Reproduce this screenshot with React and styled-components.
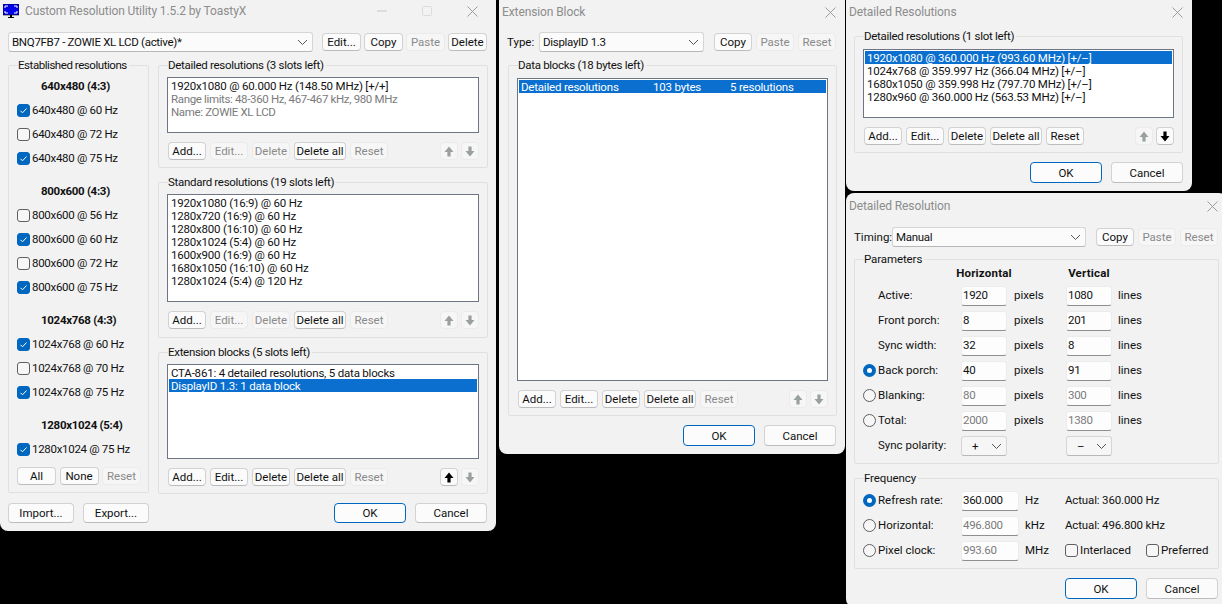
import React from "react";
import styled, { createGlobalStyle } from "styled-components";

const Global = createGlobalStyle`
  html, body { margin: 0; padding: 0; height: 100%; background: #000; overflow: hidden; }
  #root { height: 100%; }
  * { box-sizing: border-box; }
`;

const Desktop = styled.div`
  position: relative;
  width: 1222px;
  height: 604px;
  overflow: hidden;
  background: #000;
  font-family: Roboto, "Noto Sans", "Liberation Sans", sans-serif;
  font-size: 11.5px;
  line-height: 16px;
  color: #111;
`;

const Win = styled.section`
  position: absolute;
  left: ${(p) => p.$x}px;
  top: ${(p) => p.$y}px;
  width: ${(p) => p.$w}px;
  height: ${(p) => p.$h}px;
  background: #f2f2f2;
  border-radius: ${(p) => (p.$y > 0 ? "8px 8px 8px 8px" : "0 0 8px 8px")};
  padding: 0 8px;
  overflow: hidden;
`;

const TitleBar = styled.header`
  display: flex;
  align-items: center;
  height: ${(p) => p.$h}px;
  margin-left: -5px;
  padding-bottom: ${(p) => p.$pb}px;
  color: #8c8c8c;
  font-size: 12px;
  letter-spacing: -0.1px;
`;
const TitleText = styled.span`
  flex: 1;
  white-space: nowrap;
`;
const Controls = styled.div`
  display: flex;
  align-items: center;
  gap: ${(p) => p.$gap || 0}px;
  margin-right: ${(p) => p.$mr}px;
`;
const Glyph = styled.svg`
  display: block;
  flex: none;
`;

const Row = styled.div`
  display: flex;
  align-items: center;
`;
const TopRow = styled(Row)`
  height: 20px;
  gap: ${(p) => p.$gap ?? 3}px;
`;

const Combo = styled.div`
  display: flex;
  align-items: center;
  justify-content: space-between;
  flex: none;
  width: ${(p) => p.$w}px;
  height: 20px;
  padding: 0 4px 0 3px;
  margin-right: ${(p) => p.$mr || 0}px;
  letter-spacing: -0.3px;
  background: #fbfbfb;
  border: 1px solid #d6d6d6;
  border-bottom-color: #b8b8b8;
  border-radius: 3px;
  white-space: nowrap;
`;

const Btn = styled.button`
  flex: none;
  display: flex;
  align-items: center;
  justify-content: center;
  width: ${(p) => p.$w || 38}px;
  height: ${(p) => p.$h || 18}px;
  padding: 0;
  font: inherit;
  white-space: nowrap;
  color: ${(p) => (p.disabled ? "#8a8a8a" : "#111")};
  background: ${(p) => (p.disabled ? "#f6f6f6" : "#fbfbfb")};
  border: 1px solid ${(p) => (p.disabled ? "#ebebeb" : "#d2d2d2")};
  border-bottom-color: ${(p) => (p.disabled ? "#ebebeb" : "#bcbcbc")};
  border-radius: 4px;
`;
const DefaultBtn = styled(Btn)`
  border: 1px solid #0067c0;
  background: #fcfcfc;
`;

const Group = styled.div`
  position: relative;
  flex: none;
  width: ${(p) => p.$w}px;
  height: ${(p) => p.$h}px;
  margin-top: ${(p) => p.$mt || 0}px;
  margin-left: ${(p) => p.$ml || 0}px;
  padding: ${(p) => p.$pt ?? 11}px 8px 0;
  border: 1px solid #e0e0e0;
  border-radius: 2px;
`;
const Legend = styled.span`
  position: absolute;
  top: -9px;
  left: 9px;
  padding: 0 2px 0 0;
  background: #f2f2f2;
  white-space: nowrap;
  letter-spacing: ${(p) => p.$ls ?? -0.3}px;
`;

const ListBox = styled.div`
  height: ${(p) => p.$h}px;
  padding: 1px;
  background: #fff;
  border: 1px solid #6d7682;
  overflow: hidden;
`;
const ListRow = styled.div`
  display: flex;
  height: 13px;
  line-height: 14px;
  padding-left: 2px;
  letter-spacing: ${(p) => (p.$muted ? -0.35 : -0.2)}px;
  white-space: nowrap;
  color: ${(p) => (p.$sel ? "#fff" : p.$muted ? "#7b7b7b" : "#111")};
  background: ${(p) => (p.$sel ? "#0a6fcf" : "transparent")};
`;
const Cell = styled.span`
  width: ${(p) => p.$w}px;
`;

const BtnRow = styled(Row)`
  gap: 4px;
  margin-top: 9px;
  padding-left: 1px;
`;
const ArrowRow = styled(Row)`
  gap: 3px;
  margin-left: auto;
`;

const Footer = styled(Row)`
  gap: 9px;
  margin-top: 9px;
  margin-right: 1px;
`;
const Spacer = styled.div`
  flex: 1;
`;

const Columns = styled.div`
  display: flex;
  gap: 9px;
  margin-top: 13px;
`;
const RightCol = styled.div`
  display: flex;
  flex-direction: column;
  gap: 14px;
`;
const Sections = styled.div`
  display: flex;
  flex-direction: column;
  gap: 17px;
`;
const Section = styled.div`
  display: flex;
  flex-direction: column;
  gap: 8px;
`;
const SectionHead = styled.div`
  padding-left: 24px;
  font-weight: 700;
  letter-spacing: -0.3px;
  white-space: nowrap;
`;
const CheckRow = styled.label`
  display: flex;
  align-items: center;
  gap: ${(p) => p.$gap ?? 2}px;
  height: 16px;
  white-space: nowrap;
  letter-spacing: ${(p) => p.$ls || 0}px;
`;
const Box = styled.span`
  flex: none;
  display: flex;
  align-items: center;
  justify-content: center;
  width: 13px;
  height: 13px;
  border-radius: 3px;
  background: ${(p) => (p.$on ? "#0067c0" : "#f7f7f7")};
  border: 1px solid ${(p) => (p.$on ? "#0067c0" : "#5f5f5f")};
`;
const SideBtns = styled(Row)`
  gap: 3.5px;
  margin-top: 10px;
`;

const Dot = styled.span`
  flex: none;
  width: 13px;
  height: 13px;
  margin-right: 2px;
  border-radius: 50%;
  background: ${(p) => (p.$on ? "#fff" : "#f7f7f7")};
  border: ${(p) => (p.$on ? "4px solid #0067c0" : "1px solid #5f5f5f")};
`;
const NoDot = styled.span`
  flex: none;
  width: 15px;
`;

const Params = styled.div`
  display: flex;
  flex-direction: column;
  gap: 5px;
`;
const FieldRow = styled(Row)`
  height: 20px;
  padding-bottom: 2px;
  white-space: nowrap;
`;
const HeadRow = styled(Row)`
  height: 16px;
  padding-top: 1px;
  margin-bottom: 6px;
  font-weight: 700;
  letter-spacing: 0.2px;
  white-space: nowrap;
`;
const Lbl = styled.span`
  flex: none;
  width: ${(p) => p.$w}px;
`;
const HeadCell = styled.span`
  flex: none;
  display: flex;
  justify-content: center;
  width: 46px;
  margin-right: ${(p) => p.$mr}px;
`;
const Field = styled.div`
  flex: none;
  align-self: flex-start;
  width: ${(p) => p.$w}px;
  height: 20px;
  line-height: 16px;
  padding: 0 1px;
  margin-right: ${(p) => p.$mr}px;
  letter-spacing: -0.3px;
  color: ${(p) => (p.$off ? "#7b7b7b" : "#111")};
  background: #fdfdfd;
  border: 1px solid #ececec;
  border-bottom-color: #8f8f8f;
  border-radius: 3px;
`;
const Unit = styled.span`
  flex: none;
  width: ${(p) => p.$w}px;
`;
const Actual = styled.span`
  letter-spacing: -0.15px;
`;
const Pol = styled(Combo)`
  align-self: flex-start;
  width: 46px;
  padding: 0 4px 0 10px;
  margin-right: ${(p) => p.$mr}px;
  background: #f6f6f6;
`;

const Chevron = () => (
  <Glyph width="11" height="7" viewBox="0 0 11 7">
    <path d="M1 1l4.5 4.5L10 1" fill="none" stroke="#555" strokeWidth="1" />
  </Glyph>
);
const Close = () => (
  <Glyph width="11" height="11" viewBox="0 0 11 11">
    <path d="M.5.5l10 10M10.5.5l-10 10" stroke="#9c9c9c" strokeWidth="1" />
  </Glyph>
);
const Tick = () => (
  <Glyph width="9" height="9" viewBox="0 0 9 9">
    <path d="M1.5 4.8l2 2 4-4.3" fill="none" stroke="#fff" strokeWidth="1" />
  </Glyph>
);
const Arrow = ({ up, off }) => (
  <Glyph width="10" height="11" viewBox="0 0 10 11">
    <path
      d={up ? "M5 .5L9.5 6H6.6v4.5H3.4V6H.5z" : "M5 10.5L9.5 5H6.6V.5H3.4V5H.5z"}
      fill={off ? "#9aa0a0" : "#000"}
    />
  </Glyph>
);
const AppIconSvg = styled(Glyph)`
  margin-right: 6px;
`;
const AppIcon = () => (
  <AppIconSvg width="16" height="14" viewBox="0 0 16 14">
    <rect x="0" y="0" width="16" height="11" fill="#0000e8" stroke="#000" strokeWidth=".6" />
    <path d="M2 4V2h3M11 2h3v2M14 7v2h-3M5 9H2V7" fill="none" stroke="#fff" strokeWidth="1" />
    <path d="M7 11h2v2h2v1H5v-1h2z" fill="#000" />
  </AppIconSvg>
);

const Check = ({ on, children, gap, ls }) => (
  <CheckRow $gap={gap} $ls={ls}>
    <Box $on={on}>{on && <Tick />}</Box>
    {children}
  </CheckRow>
);

const Buttons = ({ items, up, down }) => (
  <BtnRow>
    {items.map(([t, off, w]) => (
      <Btn key={t} disabled={off} $w={w}>{t}</Btn>
    ))}
    <ArrowRow>
      <Btn $w={18} disabled={!up}><Arrow up off={!up} /></Btn>
      <Btn $w={18} disabled={!down}><Arrow off={!down} /></Btn>
    </ArrowRow>
  </BtnRow>
);

const Dialogs = () => (
  <Footer>
    <Spacer />
    <DefaultBtn $w={72} $h={21}>OK</DefaultBtn>
    <Btn $w={72} $h={21}>Cancel</Btn>
  </Footer>
);

const established = [
  ["640x480 (4:3)", [["640x480 @ 60 Hz", 1], ["640x480 @ 72 Hz", 0], ["640x480 @ 75 Hz", 1]]],
  ["800x600 (4:3)", [["800x600 @ 56 Hz", 0], ["800x600 @ 60 Hz", 1], ["800x600 @ 72 Hz", 0], ["800x600 @ 75 Hz", 1]]],
  ["1024x768 (4:3)", [["1024x768 @ 60 Hz", 1], ["1024x768 @ 70 Hz", 0], ["1024x768 @ 75 Hz", 1]]],
  ["1280x1024 (5:4)", [["1280x1024 @ 75 Hz", 1]]],
];

const MainWindow = () => (
  <Win $x={0} $y={0} $w={496} $h={531}>
    <TitleBar $h={32} $pb={10}>
      <AppIcon />
      <TitleText>Custom Resolution Utility 1.5.2 by ToastyX</TitleText>
      <Controls $gap={35} $mr={10}>
        <Glyph width="10" height="2" viewBox="0 0 10 2"><path d="M0 1h10" stroke="#c8c8c8" /></Glyph>
        <Glyph width="10" height="10" viewBox="0 0 10 10"><rect x=".5" y=".5" width="9" height="9" rx="1" fill="none" stroke="#dcdcdc" /></Glyph>
        <Close />
      </Controls>
    </TitleBar>
    <TopRow>
      <Combo $w={305} $mr={6}>BNQ7FB7 - ZOWIE XL LCD (active)*<Chevron /></Combo>
      <Btn $w={39}>Edit...</Btn>
      <Btn $w={39}>Copy</Btn>
      <Btn $w={39} disabled>Paste</Btn>
      <Btn $w={39}>Delete</Btn>
    </TopRow>
    <Columns>
      <Group $w={141} $h={428} $pt={12}>
        <Legend $ls={-0.45}>Established resolutions</Legend>
        <Sections>
          {established.map(([head, rows]) => (
            <Section key={head}>
              <SectionHead>{head}</SectionHead>
              {rows.map(([t, on]) => <Check key={t} on={!!on} ls={-0.3}>{t}</Check>)}
            </Section>
          ))}
        </Sections>
        <SideBtns>
          <Btn $w={39}>All</Btn>
          <Btn $w={39}>None</Btn>
          <Btn $w={39} disabled>Reset</Btn>
        </SideBtns>
      </Group>
      <RightCol>
        <Group $w={330} $h={103}>
          <Legend>Detailed resolutions (3 slots left)</Legend>
          <ListBox $h={56}>
            <ListRow>1920x1080 @ 60.000 Hz (148.50 MHz) [+/+]</ListRow>
            <ListRow $muted>Range limits: 48-360 Hz, 467-467 kHz, 980 MHz</ListRow>
            <ListRow $muted>Name: ZOWIE XL LCD</ListRow>
          </ListBox>
          <Buttons items={[["Add...", false], ["Edit...", true], ["Delete", true], ["Delete all", false, 52], ["Reset", true]]} />
        </Group>
        <Group $w={330} $h={156}>
          <Legend>Standard resolutions (19 slots left)</Legend>
          <ListBox $h={108}>
            {["1920x1080 (16:9) @ 60 Hz", "1280x720 (16:9) @ 60 Hz", "1280x800 (16:10) @ 60 Hz", "1280x1024 (5:4) @ 60 Hz", "1600x900 (16:9) @ 60 Hz", "1680x1050 (16:10) @ 60 Hz", "1280x1024 (5:4) @ 120 Hz"].map((t) => (
              <ListRow key={t}>{t}</ListRow>
            ))}
          </ListBox>
          <Buttons items={[["Add...", false], ["Edit...", true], ["Delete", true], ["Delete all", false, 52], ["Reset", true]]} />
        </Group>
        <Group $w={330} $h={142}>
          <Legend>Extension blocks (5 slots left)</Legend>
          <ListBox $h={95}>
            <ListRow>CTA-861: 4 detailed resolutions, 5 data blocks</ListRow>
            <ListRow $sel>DisplayID 1.3: 1 data block</ListRow>
          </ListBox>
          <Buttons up items={[["Add...", false], ["Edit...", false], ["Delete", false], ["Delete all", false, 52], ["Reset", true]]} />
        </Group>
      </RightCol>
    </Columns>
    <Footer>
      <Btn $w={66} $h={20}>Import...</Btn>
      <Btn $w={66} $h={20}>Export...</Btn>
      <Spacer />
      <DefaultBtn $w={72} $h={20}>OK</DefaultBtn>
      <Btn $w={72} $h={20}>Cancel</Btn>
    </Footer>
  </Win>
);

const ExtensionWindow = () => (
  <Win $x={499} $y={0} $w={346} $h={454}>
    <TitleBar $h={32} $pb={8}>
      <TitleText>Extension Block</TitleText>
      <Controls $mr={1}><Close /></Controls>
    </TitleBar>
    <TopRow $gap={4}>
      <Lbl $w={28}>Type:</Lbl>
      <Combo $w={165} $mr={6}>DisplayID 1.3<Chevron /></Combo>
      <Btn>Copy</Btn>
      <Btn disabled>Paste</Btn>
      <Btn disabled>Reset</Btn>
    </TopRow>
    <Group $w={329} $h={351} $pt={12} $mt={13} $ml={1}>
      <Legend>Data blocks (18 bytes left)</Legend>
      <ListBox $h={303}>
        <ListRow $sel>
          <Cell $w={132}>Detailed resolutions</Cell>
          <Cell $w={77}>103 bytes</Cell>
          <Cell $w={80}>5 resolutions</Cell>
        </ListRow>
      </ListBox>
      <Buttons items={[["Add...", false], ["Edit...", false], ["Delete", false], ["Delete all", false, 52], ["Reset", true]]} />
    </Group>
    <Dialogs />
  </Win>
);

const DetailedListWindow = () => (
  <Win $x={846} $y={0} $w={346} $h={191}>
    <TitleBar $h={36} $pb={12}>
      <TitleText>Detailed Resolutions</TitleText>
      <Controls $mr={1}><Close /></Controls>
    </TitleBar>
    <Group $w={329} $h={117} $pt={12}>
      <Legend>Detailed resolutions (1 slot left)</Legend>
      <ListBox $h={69}>
        <ListRow $sel>1920x1080 @ 360.000 Hz (993.60 MHz) [+/–]</ListRow>
        <ListRow>1024x768 @ 359.997 Hz (366.04 MHz) [+/–]</ListRow>
        <ListRow>1680x1050 @ 359.998 Hz (797.70 MHz) [+/–]</ListRow>
        <ListRow>1280x960 @ 360.000 Hz (563.53 MHz) [+/–]</ListRow>
      </ListBox>
      <Buttons down items={[["Add...", false], ["Edit...", false], ["Delete", false], ["Delete all", false, 52], ["Reset", false]]} />
    </Group>
    <Dialogs />
  </Win>
);

const timing = [
  ["Active:", "1920", "1080", 0, false],
  ["Front porch:", "8", "201", 0, false],
  ["Sync width:", "32", "8", 0, false],
  ["Back porch:", "40", "91", 2, false],
  ["Blanking:", "80", "300", 1, true],
  ["Total:", "2000", "1380", 1, true],
];

const Radio = ({ kind }) => (kind === 0 ? <NoDot /> : <Dot $on={kind === 2} />);

const TimingWindow = () => (
  <Win $x={846} $y={193} $w={381} $h={414}>
    <TitleBar $h={34} $pb={8}>
      <TitleText>Detailed Resolution</TitleText>
      <Controls $mr={1}><Close /></Controls>
    </TitleBar>
    <TopRow $gap={4}>
      <Lbl $w={34}>Timing:</Lbl>
      <Combo $w={194} $mr={6}>Manual<Chevron /></Combo>
      <Btn>Copy</Btn>
      <Btn disabled>Paste</Btn>
      <Btn disabled>Reset</Btn>
    </TopRow>
    <Group $w={365} $h={205} $pt={4} $mt={12}>
      <Legend $ls={-0.1}>Parameters</Legend>
      <HeadRow>
        <Lbl $w={98} />
        <HeadCell $mr={59}>Horizontal</HeadCell>
        <HeadCell $mr={0}>Vertical</HeadCell>
      </HeadRow>
      <Params>
        {timing.map(([label, h, v, kind, off]) => (
          <FieldRow key={label}>
            <Radio kind={kind} />
            <Lbl $w={83}>{label}</Lbl>
            <Field $w={46} $mr={7} $off={off}>{h}</Field>
            <Unit $w={52}>pixels</Unit>
            <Field $w={46} $mr={6} $off={off}>{v}</Field>
            <Unit $w={40}>lines</Unit>
          </FieldRow>
        ))}
        <FieldRow>
          <NoDot />
          <Lbl $w={83}>Sync polarity:</Lbl>
          <Pol $mr={59}>+<Chevron /></Pol>
          <Pol $mr={0}>–<Chevron /></Pol>
        </FieldRow>
      </Params>
    </Group>
    <Group $w={365} $h={91} $pt={12} $mt={14}>
      <Legend $ls={-0.1}>Frequency</Legend>
      <Params>
        <FieldRow>
          <Radio kind={2} />
          <Lbl $w={83}>Refresh rate:</Lbl>
          <Field $w={58} $mr={6}>360.000</Field>
          <Unit $w={40}>Hz</Unit>
          <Actual>Actual: 360.000 Hz</Actual>
        </FieldRow>
        <FieldRow>
          <Radio kind={1} />
          <Lbl $w={83}>Horizontal:</Lbl>
          <Field $w={58} $mr={6} $off>496.800</Field>
          <Unit $w={40}>kHz</Unit>
          <Actual>Actual: 496.800 kHz</Actual>
        </FieldRow>
        <FieldRow>
          <Radio kind={1} />
          <Lbl $w={83}>Pixel clock:</Lbl>
          <Field $w={58} $mr={6} $off>993.60</Field>
          <Unit $w={40}>MHz</Unit>
          <Lbl $w={81}><Check>Interlaced</Check></Lbl>
          <Check>Preferred</Check>
        </FieldRow>
      </Params>
    </Group>
    <Dialogs />
  </Win>
);

export default function App() {
  return (
    <Desktop>
      <Global />
      <MainWindow />
      <ExtensionWindow />
      <DetailedListWindow />
      <TimingWindow />
    </Desktop>
  );
}
